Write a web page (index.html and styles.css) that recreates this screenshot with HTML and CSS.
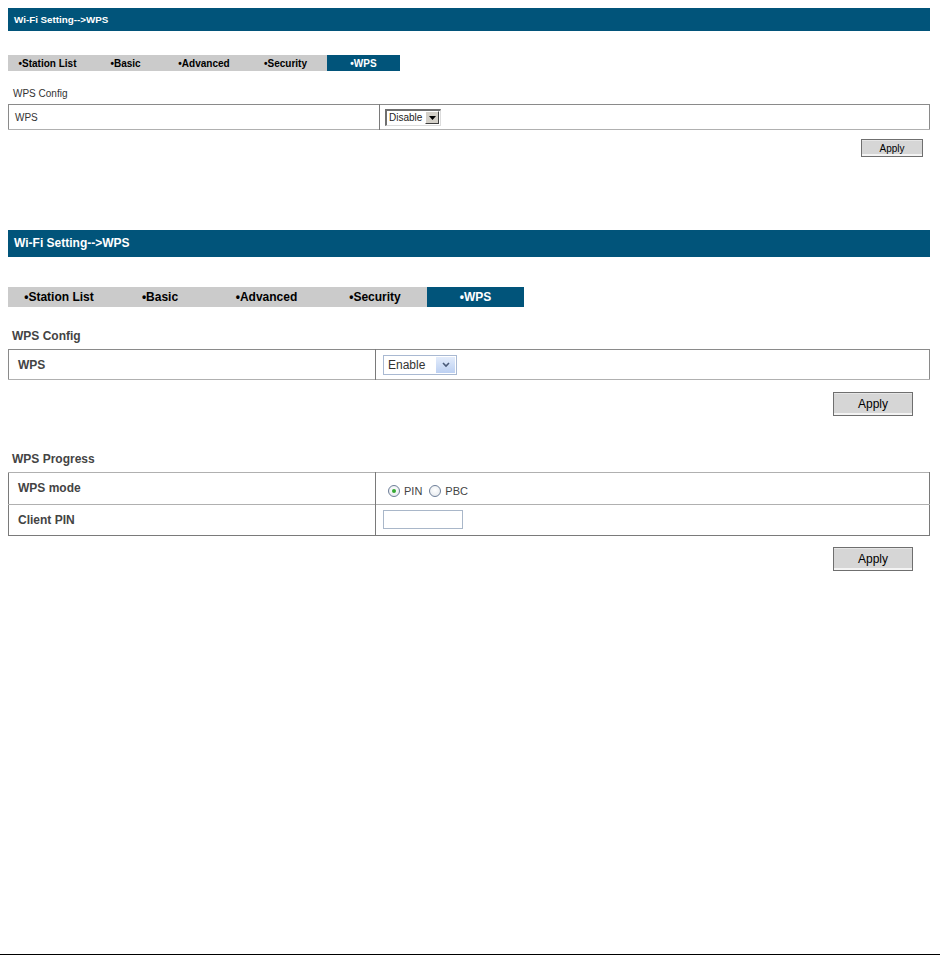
FILE: index.html
```html
<!DOCTYPE html>
<html>
<head>
<meta charset="utf-8">
<title>Wi-Fi Setting - WPS</title>
<link rel="stylesheet" href="styles.css">
</head>
<body>
<div class="page">
  <div class="content">
    <section class="panel small">
      <div class="title">Wi-Fi Setting--&gt;WPS</div>
      <div class="tabs">
        <div class="tab">•Station List</div>
        <div class="tab">•Basic</div>
        <div class="tab">•Advanced</div>
        <div class="tab">•Security</div>
        <div class="tab active">•WPS</div>
      </div>
      <div class="heading">WPS Config</div>
      <table class="form cfg">
        <tr>
          <td class="lbl">WPS</td>
          <td class="val">
            <span class="select classic"><span class="sv">Disable</span><span class="sb"><svg width="7" height="4" viewBox="0 0 7 4"><path d="M0 0h7L3.5 4z" fill="#000"/></svg></span></span>
          </td>
        </tr>
      </table>
      <div class="actions"><button class="btn">Apply</button></div>
    </section>

    <section class="panel large">
      <div class="title">Wi-Fi Setting--&gt;WPS</div>
      <div class="tabs">
        <div class="tab">•Station List</div>
        <div class="tab">•Basic</div>
        <div class="tab">•Advanced</div>
        <div class="tab">•Security</div>
        <div class="tab active">•WPS</div>
      </div>
      <div class="heading">WPS Config</div>
      <table class="form cfg">
        <tr>
          <td class="lbl">WPS</td>
          <td class="val">
            <span class="select modern"><span class="sv">Enable</span><span class="sb"><svg width="8" height="6" viewBox="0 0 8 6"><path d="M1 1l3 3 3-3" fill="none" stroke="#4a5a78" stroke-width="1.6"/></svg></span></span>
          </td>
        </tr>
      </table>
      <div class="actions"><button class="btn">Apply</button></div>

      <div class="heading progress">WPS Progress</div>
      <table class="form prog">
        <tr>
          <td class="lbl">WPS mode</td>
          <td class="val">
            <span class="radios">
              <span class="radio checked"></span><span class="rl">PIN</span>
              <span class="radio"></span><span class="rl">PBC</span>
            </span>
          </td>
        </tr>
        <tr>
          <td class="lbl">Client PIN</td>
          <td class="val"><span class="textbox"></span></td>
        </tr>
      </table>
      <div class="actions"><button class="btn">Apply</button></div>
    </section>
  </div>
  <div class="rule"></div>
</div>
</body>
</html>
```

FILE: styles.css
```css
* { box-sizing: border-box; }
html, body { margin: 0; padding: 0; background: #fff; }
body { font-family: "Liberation Sans", Arial, sans-serif; color: #000; }

.page { min-height: 956px; display: flex; flex-direction: column; }
.content { padding: 8px 10px 0 8px; }
.rule { margin-top: auto; height: 1px; background: #000; margin-bottom: 1px; }

/* title bar */
.title { background: #01547a; color: #fff; font-weight: bold; white-space: nowrap; }
.small .title { height: 23px; line-height: 23px; font-size: 9.8px; padding-left: 6px; }
.large .title { height: 27px; line-height: 27px; font-size: 12px; padding-left: 6px; }

/* tabs */
.tabs { display: grid; width: max-content; }
.small .tabs { margin-top: 24px; grid-template-columns: 79px 77px 80px 83px 73px; }
.large .tabs { margin-top: 30px; grid-template-columns: 102px 100px 113px 104px 97px; }
.tab { background: #cbcbcb; text-align: center; font-weight: bold; color: #000; white-space: nowrap; }
.small .tab { height: 16px; line-height: 17px; font-size: 10px; }
.large .tab { height: 20px; line-height: 20px; font-size: 12px; }
.tab.active { background: #01547a; color: #fff; }

/* headings */
.small .heading { margin-top: 16px; height: 14px; line-height: 14px; font-size: 10px; color: #333; padding-left: 5px; }
.large .heading { margin-top: 20px; height: 18px; line-height: 18px; font-size: 12px; font-weight: bold; color: #444; padding-left: 4px; }
.large .heading.progress { margin-top: 34px; }

/* form tables */
.form { width: 100%; border-collapse: collapse; }
.form td { padding: 0; vertical-align: middle; }
.form .lbl { border-right: 1px solid #7a7a7a; }
.small .form { margin-top: 3px; }
.large .form { margin-top: 4px; }

.small .cfg { border: 1px solid #8a8a8a; border-bottom-color: #b0b0b0; }
.small .cfg tr { height: 25px; }
.small .cfg .lbl { width: 371px; font-size: 10px; color: #333; padding-left: 6px; }
.small .cfg .val { padding-left: 5px; }

.large .cfg { border: 1px solid #8a8a8a; border-bottom-color: #b0b0b0; }
.large .cfg tr { height: 30px; }
.large .lbl { width: 367px; font-size: 12px; font-weight: bold; color: #444; padding-left: 9px; }
.large .val { padding-left: 7px; }

.prog { border: 1px solid #7a7a7a; border-top-color: #b0b0b0; }
.prog tr { height: 31.5px; }
.prog tr + tr td { border-top: 1px solid #b0b0b0; }

/* classic select */
.select { display: inline-flex; align-items: stretch; vertical-align: middle; }
.select.classic {
  width: 56px; height: 17px;
  border-top: 2px solid #6f6f6f; border-left: 2px solid #6f6f6f;
  border-right: 1px solid #dcdcdc; border-bottom: 1px solid #dcdcdc;
  background: #fff; font-size: 10px; color: #222;
}
.select.classic .sv { flex: 1; line-height: 14px; padding-left: 2px; }
.select.classic .sb {
  width: 14px; margin: 0 1px 1px 0; background: #d4d0c8;
  border-top: 1px solid #fff; border-left: 1px solid #fff;
  border-right: 1px solid #404040; border-bottom: 1px solid #404040;
  display: flex; align-items: center; justify-content: center;
}

/* modern select */
.select.modern {
  width: 74px; height: 20px; border: 1px solid #a9b9d2; background: #fff;
  font-size: 12px; color: #333;
}
.select.modern .sv { flex: 1; line-height: 18px; padding-left: 4px; }
.select.modern .sb {
  width: 19px; margin: 1px; background: linear-gradient(#e3ecfb, #bcd0f2);
  display: flex; align-items: center; justify-content: center;
}

/* radios */
.radios { display: inline-flex; align-items: center; font-size: 11px; color: #444; margin-left: 5px; margin-top: 4px; }
.radio {
  width: 12px; height: 12px; border-radius: 50%; border: 1px solid #6e7f99;
  background: radial-gradient(circle at 50% 40%, #fff, #e2e6ea);
  display: inline-flex; align-items: center; justify-content: center;
}
.radio.checked::after { content: ""; width: 4px; height: 4px; border-radius: 50%; background: #35a832; }
.rl { margin-left: 4px; margin-right: 7px; }

/* text box */
.textbox { display: inline-block; vertical-align: middle; width: 80px; height: 19px; border: 1px solid #a9b7c9; background: #fff; }

/* buttons */
.actions { display: flex; justify-content: flex-end; }
.btn {
  font-family: "Liberation Sans", Arial, sans-serif; color: #000;
  background: #d6d6d6; border: 1px solid #6f6f6f; padding: 0; margin: 0;
  box-shadow: inset 0 -2px 0 #f4f4f4, inset 0 1px 0 #e6e6e6;
}
.small .actions { margin-top: 9px; padding-right: 7px; }
.small .btn { width: 62px; height: 18px; font-size: 10px; }
.large .actions { margin-top: 12px; padding-right: 17px; }
.large .prog + .actions { margin-top: 11px; }
.large .btn { width: 80px; height: 24px; font-size: 12px; }

.large { margin-top: 73px; }
```
